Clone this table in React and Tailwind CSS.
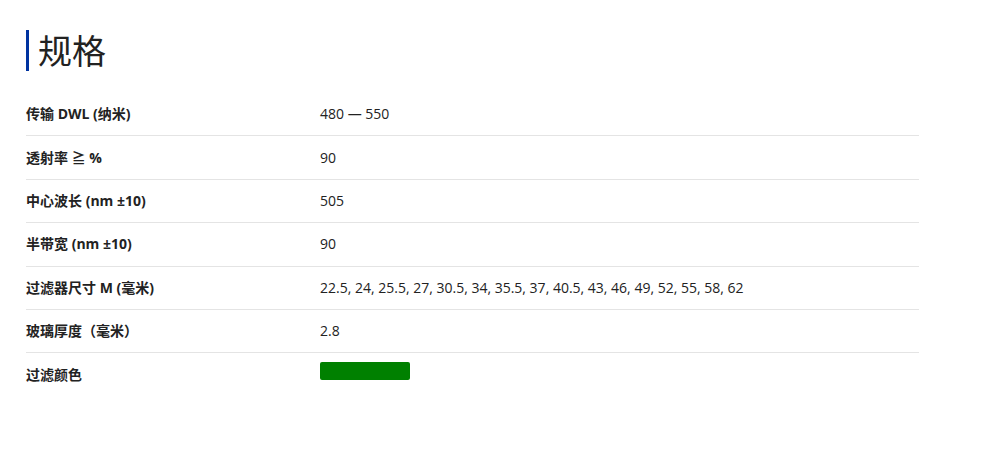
const rows = [
  { label: "传输 DWL (纳米)", value: "480 — 550" },
  { label: "透射率 ≧ %", value: "90" },
  { label: "中心波长 (nm ±10)", value: "505" },
  { label: "半带宽 (nm ±10)", value: "90" },
  { label: "过滤器尺寸 M (毫米)", value: "22.5, 24, 25.5, 27, 30.5, 34, 35.5, 37, 40.5, 43, 46, 49, 52, 55, 58, 62" },
  { label: "玻璃厚度（毫米）", value: "2.8" },
  { label: "过滤颜色", swatch: "#008000" },
]

export default function App() {
  return (
    <div className="min-h-[456px] bg-white pl-[26px] pt-[30px] font-['Open_Sans','Noto_Sans_CJK_SC',sans-serif] text-[#222]">
      {/* heading */}
      <div className="flex h-[41px] items-center border-l-[3px] border-[#0033a0] pl-[9px]">
        <h2 className="text-[34px] leading-none font-normal text-[#222]">规格</h2>
      </div>

      {/* spec table */}
      <div className="mt-[22px] w-[893px]">
        {rows.map((r, i) => (
          <div
            key={i}
            className={`flex h-[43.4px] items-center ${i < rows.length - 1 ? "border-b border-[#e4e4e4]" : ""}`}
          >
            <div className="w-[294px] text-[14px] leading-5 font-bold">{r.label}</div>
            <div className="flex-1 text-[14px] leading-5">
              {r.swatch ? (
                <div className="mb-[8px] h-[18px] w-[90px] rounded-[2px] bg-[#008000]" />
              ) : (
                r.value
              )}
            </div>
          </div>
        ))}
      </div>
    </div>
  )
}
